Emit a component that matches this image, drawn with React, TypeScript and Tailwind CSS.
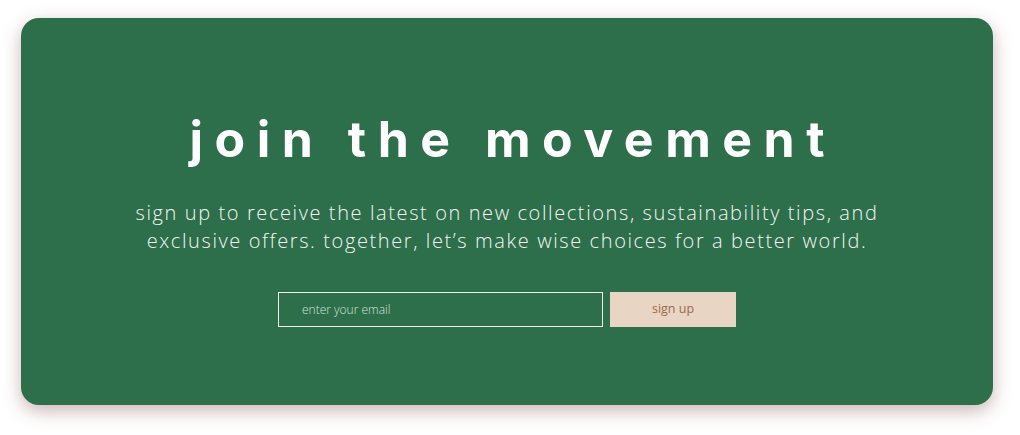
export default function App() {
  return (
    <div className="w-[1020px] h-[435px] bg-white pt-[18px] pl-[21px]">
      <section className="w-[972px] h-[387px] rounded-[18px] bg-[#2d6e4b] shadow-[0_6px_18px_rgba(110,50,50,0.35)] flex flex-col items-center pt-[93px]">
        <h1 className="font-['Inter',sans-serif] font-bold text-[50px] leading-[56px] tracking-[11.5px] text-white pl-[11.5px]">
          join the movement
        </h1>
        <p className="mt-[32px] font-['Open_Sans',sans-serif] font-light text-[20px] leading-[28px] tracking-[1.6px] text-[#f4f6f4] text-center">
          sign up to receive the latest on new collections, sustainability tips, and
          <br />
          exclusive offers. together, let’s make wise choices for a better world.
        </p>
        <form className="mt-[37px] flex gap-[7px]" onSubmit={(e) => e.preventDefault()}>
          <input
            type="email"
            placeholder="enter your email"
            className="w-[325px] h-[35px] border border-[#eef3ef] bg-transparent px-[23px] font-['Open_Sans',sans-serif] font-light text-[12px] text-white placeholder:text-[#d6e4da] outline-none"
          />
          <button
            type="submit"
            className="w-[126px] h-[35px] bg-[#e8d5c4] font-['Open_Sans',sans-serif] text-[12.5px] text-[#9c6b48]"
          >
            sign up
          </button>
        </form>
      </section>
    </div>
  );
}
